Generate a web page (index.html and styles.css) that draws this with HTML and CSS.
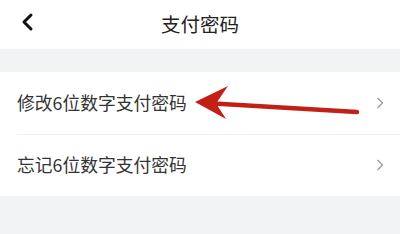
FILE: index.html
```html
<!DOCTYPE html>
<html lang="zh-CN">
<head>
    <meta charset="UTF-8">
    <meta name="viewport" content="width=device-width, initial-scale=1.0">
    <title>支付密码</title>
    <link rel="stylesheet" href="styles.css">
</head>
<body>
    <div class="page">
        <!-- 顶部导航 -->
        <div class="nav">
            <svg class="back" width="14" height="20" viewBox="0 0 14 20">
                <path d="M10 3 L3 10 L10 17" fill="none" stroke="#111" stroke-width="3" stroke-linecap="round" stroke-linejoin="round"/>
            </svg>
            <h1>支付密码</h1>
        </div>

        <div class="gap"></div>

        <!-- 菜单列表 -->
        <div class="list">
            <div class="item">
                <span>修改6位数字支付密码</span>
                <svg class="more" width="8" height="12" viewBox="0 0 8 12">
                    <path d="M1.5 1 L6.5 6 L1.5 11" fill="none" stroke="#999" stroke-width="1.3"/>
                </svg>
            </div>
            <div class="item">
                <span>忘记6位数字支付密码</span>
                <svg class="more" width="8" height="12" viewBox="0 0 8 12">
                    <path d="M1.5 1 L6.5 6 L1.5 11" fill="none" stroke="#999" stroke-width="1.3"/>
                </svg>
            </div>
        </div>

        <!-- 标注箭头 -->
        <svg class="arrow" width="400" height="234" viewBox="0 0 400 234">
            <path d="M214 103.5 L357 112" stroke="#c21f17" stroke-width="4.5" stroke-linecap="round"/>
            <path d="M195 102 L228 86 L216 103.5 L226 119 Z" fill="#c21f17"/>
        </svg>
    </div>
</body>
</html>
```

FILE: styles.css
```css
* {
    margin: 0;
    padding: 0;
    box-sizing: border-box;
}

body {
    font-family: "Noto Sans CJK SC", "Noto Sans", sans-serif;
    background: #f2f3f5;
    width: 400px;
    height: 234px;
    overflow: hidden;
}

.page {
    position: relative;
    height: 234px;
}

.nav {
    height: 49px;
    background: #fff;
    display: flex;
    align-items: center;
    justify-content: center;
    position: relative;
}

.nav h1 {
    font-size: 19.5px;
    font-weight: 400;
    color: #222;
    margin-top: -3px;
}

.back {
    position: absolute;
    left: 21px;
    top: 12px;
}

.gap {
    height: 23px;
}

.list {
    background: #fff;
}

.item {
    height: 62px;
    display: flex;
    align-items: center;
    justify-content: space-between;
    padding: 0 16px 0 17px;
    font-size: 17.8px;
    color: #333;
    position: relative;
}

.item + .item::before {
    content: "";
    position: absolute;
    left: 17px;
    right: 0;
    top: 0;
    border-top: 1px solid #f0f0f0;
}

.item span {
    margin-top: -2px;
}

.arrow {
    position: absolute;
    left: 0;
    top: 0;
}
```
